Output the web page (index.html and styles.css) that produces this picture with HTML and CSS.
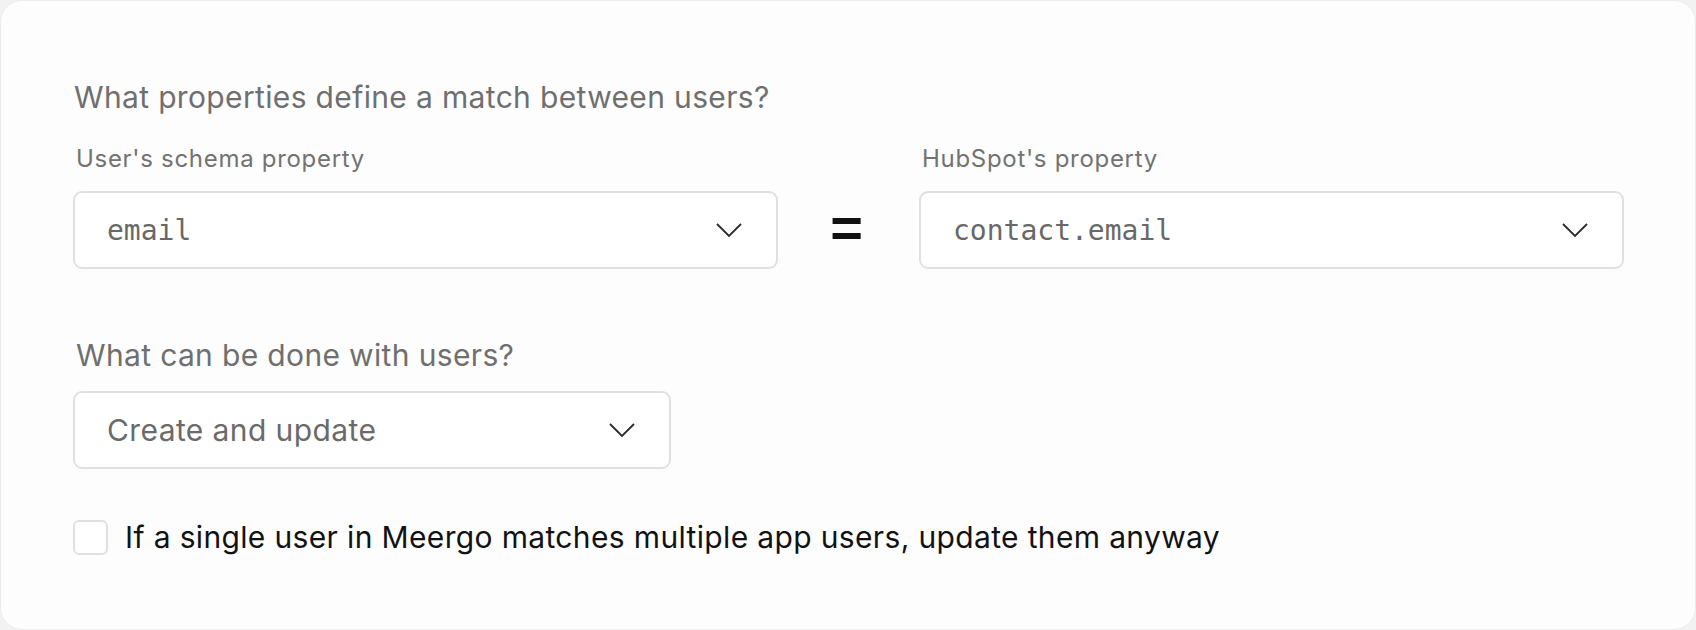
FILE: index.html
```html
<!DOCTYPE html>
<html lang="en">
<head>
<meta charset="utf-8">
<title>Users matching</title>
<link rel="stylesheet" href="styles.css">
</head>
<body>
<div class="card">
  <h2 class="question">What properties define a match between users?</h2>
  <div class="match-row">
    <div class="field">
      <div class="field-label">User's schema property</div>
      <div class="select mono">
        <span class="select-value">email</span>
        <svg class="chevron" width="26" height="14" viewBox="0 0 26 14"><path d="M1 1 L13 13 L25 1" fill="none" stroke="#2b2b2b" stroke-width="1.8"/></svg>
      </div>
    </div>
    <div class="equals">=</div>
    <div class="field">
      <div class="field-label">HubSpot's property</div>
      <div class="select mono">
        <span class="select-value">contact.email</span>
        <svg class="chevron" width="26" height="14" viewBox="0 0 26 14"><path d="M1 1 L13 13 L25 1" fill="none" stroke="#2b2b2b" stroke-width="1.8"/></svg>
      </div>
    </div>
  </div>
  <h2 class="question question-second">What can be done with users?</h2>
  <div class="select select-action">
    <span class="select-value">Create and update</span>
    <svg class="chevron" width="26" height="14" viewBox="0 0 26 14"><path d="M1 1 L13 13 L25 1" fill="none" stroke="#2b2b2b" stroke-width="1.8"/></svg>
  </div>
  <label class="check-row">
    <span class="checkbox"></span>
    <span class="check-text">If a single user in Meergo matches multiple app users, update them anyway</span>
  </label>
</div>
</body>
</html>
```
FILE: styles.css
```css
html, body {
  margin: 0;
  padding: 0;
  background: #f2f2f2;
}
body {
  font-family: Inter, "Noto Sans", "Liberation Sans", sans-serif;
}
.card {
  box-sizing: border-box;
  width: 1696px;
  height: 630px;
  background: #fdfdfd;
  border: 1px solid #ececec;
  border-radius: 22px;
  padding: 79px 71px 0 72px;
}
.question {
  margin: 0 0 0 1px;
  font-size: 30px;
  line-height: 34px;
  letter-spacing: 0.35px;
  font-weight: 400;
  color: #6f6f6f;
}
.match-row {
  display: grid;
  grid-template-columns: 1fr 141px 1fr;
  align-items: end;
  margin-top: 31px;
}
.field-label {
  font-size: 24px;
  line-height: 28px;
  letter-spacing: 0.7px;
  color: #727272;
  margin-left: 3px;
  margin-bottom: 18px;
}
.select {
  box-sizing: border-box;
  height: 78px;
  border: 2px solid #e0e0e0;
  border-radius: 9px;
  background: #ffffff;
  display: flex;
  align-items: center;
  justify-content: space-between;
  padding: 0 34px 0 32px;
}
.select-value {
  font-size: 30px;
  letter-spacing: 0.4px;
  color: #6a6a6a;
}
.mono .select-value {
  font-family: "DejaVu Sans Mono", "Liberation Mono", monospace;
  font-size: 28px;
  letter-spacing: 0;
  color: #686868;
}
.chevron {
  display: block;
  flex: none;
}
.equals {
  height: 78px;
  display: flex;
  align-items: center;
  justify-content: center;
  font-family: "Liberation Sans", Arial, sans-serif;
  font-weight: 700;
  font-size: 56px;
  line-height: 1;
  color: #111;
  padding: 0 4px 4px 0;
  box-sizing: border-box;
}
.question-second {
  margin-top: 69px;
  margin-left: 3px;
}
.select-action {
  width: 598px;
  margin-top: 19px;
}
.check-row {
  display: flex;
  align-items: center;
  gap: 17px;
  margin-top: 50px;
}
.checkbox {
  box-sizing: border-box;
  width: 35px;
  height: 35px;
  border: 2px solid #e0e0e0;
  border-radius: 6px;
  background: #fff;
  flex: none;
}
.check-text {
  font-size: 30px;
  letter-spacing: 0.35px;
  color: #121212;
}
```
